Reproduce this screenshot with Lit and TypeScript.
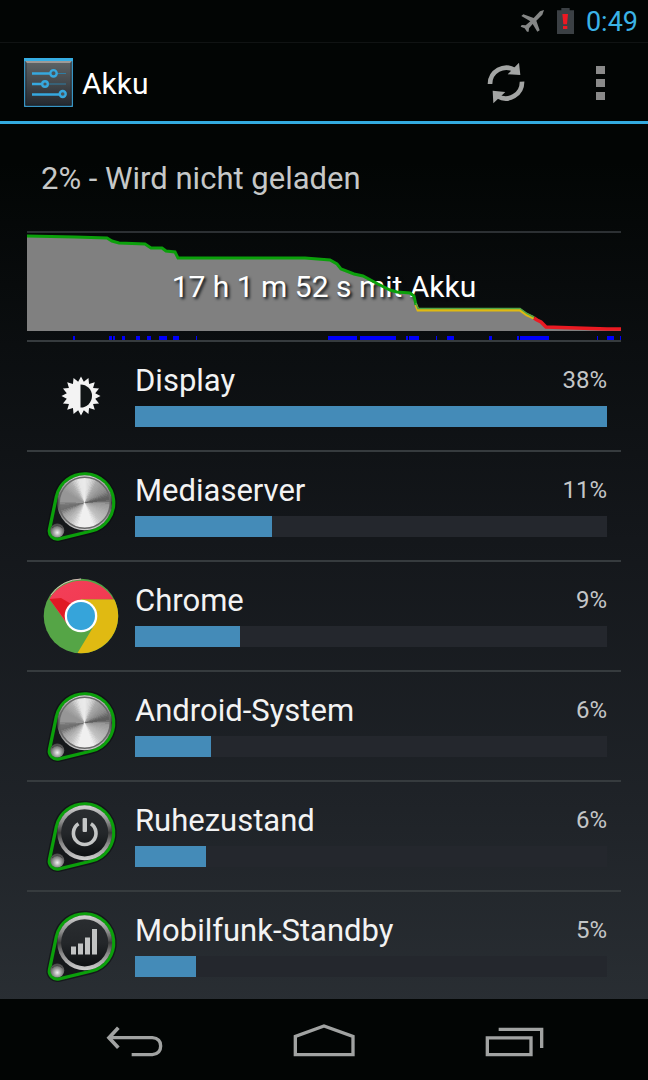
import { LitElement, html, css, svg, TemplateResult } from "lit";
import { customElement, property } from "lit/decorators.js";
import { styleMap } from "lit/directives/style-map.js";

interface Usage {
  name: string;
  percent: number;
  bar: number;
  icon: string;
}

const USAGE: Usage[] = [
  { name: "Display", percent: 38, bar: 100, icon: "display" },
  { name: "Mediaserver", percent: 11, bar: 29.1, icon: "metal" },
  { name: "Chrome", percent: 9, bar: 22.2, icon: "chrome" },
  { name: "Android-System", percent: 6, bar: 16.1, icon: "metal" },
  { name: "Ruhezustand", percent: 6, bar: 15, icon: "power" },
  { name: "Mobilfunk-Standby", percent: 5, bar: 13, icon: "signal" },
];

/* Battery history; x runs over 594 units, y over 107. */
const GREEN: number[][] = [
  [0, 3], [48, 4], [80, 5], [85, 8], [92, 10], [118, 11], [124, 15], [135, 15], [139, 18], [148, 19], [151, 25],
  [278, 25], [303, 27], [310, 31], [314, 36], [327, 41], [336, 43], [351, 51], [363, 57], [370, 59], [383, 60], [387, 63], [389, 72],
];
const YELLOW: number[][] = [[389, 72], [391, 77], [493, 77], [500, 82], [507, 85]];
const RED: number[][] = [[507, 85], [510, 87], [514, 89], [519, 94], [580, 96], [594, 96]];

const AWAKE: number[][] = [
  [46, 2], [82, 3], [86, 2], [95, 3], [109, 4], [120, 4], [132, 8], [146, 6], [169, 1], [301, 29], [333, 36],
  [379, 2], [382, 10], [409, 1], [420, 7], [462, 3], [490, 2], [493, 29], [570, 1], [580, 7], [593, 1],
];

const points = (list: number[][]) => list.map((p) => p.join(",")).join(" ");

/* Angular reflections of the brushed metal face: degrees clockwise from the top, grey level. */
const SHINE: number[][] = [
  [0, 235], [15, 215], [30, 170], [60, 140], [76, 95], [84, 95], [92, 150], [115, 175], [140, 195], [160, 240],
  [195, 240], [215, 195], [240, 160], [254, 110], [264, 115], [274, 150], [300, 150], [325, 175], [345, 230], [360, 235],
];

function grey(angle: number): number {
  for (let i = 1; i < SHINE.length; i++) {
    const [a0, g0] = SHINE[i - 1];
    const [a1, g1] = SHINE[i];
    if (angle <= a1) return Math.round(g0 + ((g1 - g0) * (angle - a0)) / (a1 - a0));
  }
  return 244;
}

const CX = 41.7;
const CY = 34.8;

function wedges(radius: number): TemplateResult[] {
  const step = 4;
  const at = (deg: number) => {
    const r = (deg * Math.PI) / 180;
    return `${(CX + radius * Math.sin(r)).toFixed(2)} ${(CY - radius * Math.cos(r)).toFixed(2)}`;
  };
  return Array.from({ length: 360 / step }, (_, i) => {
    const g = grey(i * step + step / 2);
    return svg`<path d="M${CX} ${CY}L${at(i * step)}L${at(i * step + step)}Z" fill="rgb(${g},${g},${g})" shape-rendering="crispEdges"/>`;
  });
}

function sunIcon(): TemplateResult {
  const rays = Array.from({ length: 32 }, (_, i) => {
    const r = i % 2 ? 14.5 : 19.5;
    const a = (i * Math.PI) / 16;
    return `${(38 + r * Math.sin(a)).toFixed(2)},${(38 - r * Math.cos(a)).toFixed(2)}`;
  }).join(" ");
  return html`<svg class="icon" viewBox="0 0 76 76" aria-hidden="true">
    <polygon points=${rays} fill="#f3f3f3" />
    <path d="M37.500 26.500a11.500 11.500 0 0 1 0 23z" fill="#101416" />
  </svg>`;
}

function chromeIcon(): TemplateResult {
  return html`<svg class="icon" viewBox="0 0 76 76" aria-hidden="true">
    <defs>
      <linearGradient id="red" x1="0.2" y1="0" x2="1" y2="1">
        <stop offset="0" stop-color="#f33f58" />
        <stop offset="0.6" stop-color="#f23a52" />
        <stop offset="0.75" stop-color="#e01a24" />
      </linearGradient>
    </defs>
    <circle cx="38" cy="38" r="37.3" fill="#55a546" />
    <path d="M6.400 21A37 37 0 0 1 70.500 21.500L38 21.500L24 46Z" fill="url(#red)" />
    <path d="M6.400 21L18 20L30 27L22 42Z" fill="#e01a24" />
    <path d="M38 21.500H71.300A37.300 37.300 0 0 1 34.500 75.100L52 46Z" fill="#e0ba12" />
    <circle cx="38" cy="38" r="16.300" fill="#fff" />
    <circle cx="38" cy="38" r="14" fill="#36a4da" />
    <path d="M8 17A37 37 0 0 1 38 1" fill="none" stroke="#d9b6ba" stroke-width="1" />
  </svg>`;
}

function knobIcon(kind: string): TemplateResult {
  const face =
    kind === "metal"
      ? svg`<circle cx=${CX} cy=${CY} r="27.500" fill="url(#rim)"/>${wedges(25.5)}
          <circle cx=${CX} cy=${CY} r="25.500" fill="none" stroke="#6a6a6a" stroke-width="1.500"/>`
      : svg`<circle cx=${CX} cy=${CY} r="27.500" fill="url(#rim)"/>
          <circle cx=${CX} cy=${CY} r="23.600" fill="url(#dark)"/>`;
  const glyph =
    kind === "power"
      ? svg`<path d="M35.500 25.800a11.300 11.300 0 1 0 12.400 0" fill="none" stroke="#c4c6c6" stroke-width="3.600"/>
          <rect x="39.600" y="20" width="4.400" height="14" rx="1" fill="#c4c6c6"/>`
      : kind === "signal"
        ? svg`<path d="M28 38.500h5v8h-5zM35 35.500h5v11h-5zM42 29.500h5v17h-5zM49 21h5v25.500h-5z" fill="#c2c4c4"/>`
        : null;
  return html`<svg class="icon" viewBox="0 0 76 76" aria-hidden="true">
    <defs>
      <linearGradient id="rim" x1="0" y1="0" x2="0" y2="1">
        <stop offset="0" stop-color="#d4d4d4" />
        <stop offset="0.3" stop-color="#8c8c8c" />
        <stop offset="0.5" stop-color="#3c3c3c" />
        <stop offset="0.7" stop-color="#8a8a8a" />
        <stop offset="1" stop-color="#d0d0d0" />
      </linearGradient>
      <linearGradient id="dark" x1="0" y1="0" x2="0" y2="1">
        <stop offset="0" stop-color="#2a2d30" />
        <stop offset="0.5" stop-color="#24272a" />
        <stop offset="1" stop-color="#0d1012" />
      </linearGradient>
      <radialGradient id="ball" cx="0.5" cy="0.65" r="0.6">
        <stop offset="0" stop-color="#f0f0f0" />
        <stop offset="0.5" stop-color="#999" />
        <stop offset="1" stop-color="#4a4a4a" />
      </radialGradient>
    </defs>
    <path d="M13.300 28.800A29 29 0 1 1 48.500 63L16.200 70.800A8 8 0 0 1 6.500 61.400Z" fill="#15181a" stroke="#0a0c0d" stroke-width="6" stroke-opacity="0.6" />
    <path d="M13.300 28.800A29 29 0 1 1 48.500 63L16.200 70.800A8 8 0 0 1 6.500 61.400Z" fill="#15181a" stroke="#0ba00b" stroke-width="3.300" />
    ${face}${glyph}
    <circle cx="14.300" cy="62.500" r="7" fill="url(#ball)" />
    <path d="M9 60q5-5 10.500 0" fill="none" stroke="#444" stroke-width="1" />
  </svg>`;
}

@customElement("usage-row")
class UsageRow extends LitElement {
  @property({ attribute: false }) item!: Usage;

  static styles = css`
    :host {
      display: grid;
      grid-template-columns: 76px 1fr;
      column-gap: 16px;
      align-items: center;
      padding: 0 14px 0 16px;
      border-bottom: 2px solid #363b3e;
    }
    .icon {
      display: block;
      width: 76px;
      height: 76px;
    }
    .body {
      padding: 21px 0 23px;
    }
    .labels {
      display: flex;
      justify-content: space-between;
      margin-bottom: 7px;
    }
    .name {
      margin: 0;
      font-size: 31px;
      line-height: 36px;
      font-weight: 400;
      color: #f3f3f3;
    }
    .percent {
      font-size: 24px;
      line-height: 34px;
      color: #c4c6c7;
    }
    .track {
      height: 21px;
      background: #24272d;
    }
    .fill {
      height: 100%;
      background: #448bb8;
    }
  `;

  render() {
    const { name, percent, bar, icon } = this.item;
    return html`
      ${icon === "display" ? sunIcon() : icon === "chrome" ? chromeIcon() : knobIcon(icon)}
      <div class="body">
        <div class="labels">
          <h2 class="name">${name}</h2>
          <span class="percent">${percent}%</span>
        </div>
        <div class="track" role="progressbar" aria-label=${name} aria-valuenow=${percent}>
          <div class="fill" style=${styleMap({ width: `${bar}%` })}></div>
        </div>
      </div>
    `;
  }
}

@customElement("battery-chart")
class BatteryChart extends LitElement {
  static styles = css`
    :host {
      display: grid;
      place-items: center;
      border-top: 2px solid #2c3033;
      border-bottom: 2px solid #363b3e;
    }
    .layer {
      grid-area: 1 / 1;
      display: block;
      width: 100%;
      height: 107px;
    }
    .caption {
      grid-area: 1 / 1;
      margin: 0;
      font-size: 30px;
      line-height: 36px;
      color: #fff;
      text-shadow: 2px 2px 3px #0c1216;
    }
  `;

  render() {
    return html`
      <svg class="layer" viewBox="0 0 594 107" preserveAspectRatio="none" aria-hidden="true">
        <polygon points="${points([...GREEN, ...YELLOW, ...RED])} 594,98 0,98" fill="#808080" />
        ${AWAKE.map(([x, w]) => svg`<rect x=${x} y="103" width=${w} height="4" fill="#0000fb"/>`)}
      </svg>
      <p class="caption">17 h 1 m 52 s mit Akku</p>
      <svg class="layer" viewBox="0 0 594 107" preserveAspectRatio="none" fill="none" stroke-width="3" aria-hidden="true">
        <polyline points=${points(GREEN)} stroke="#0ba00b" />
        <polyline points=${points(YELLOW)} stroke="#e0b911" />
        <polyline points="389,70 391,75.500 493,75.500 500,80.500 507,84" stroke="#4fa545" stroke-width="1.500" />
        <polyline points=${points(RED)} stroke="#ea1a22" stroke-width="3.500" />
      </svg>
    `;
  }
}

@customElement("app-root")
class AppRoot extends LitElement {
  static styles = css`
    :host {
      display: flex;
      flex-direction: column;
      height: 100vh;
      font-family: Roboto, "Noto Sans", sans-serif;
      color: #f3f3f3;
      background: linear-gradient(#020504 0, #020504 15%, #0b0e10 32%, #14171b 50%, #1f2328 75%, #292e33 93%);
    }
    .status {
      display: flex;
      justify-content: flex-end;
      align-items: center;
      height: 42px;
      padding-right: 10px;
      border-bottom: 1px solid #101313;
    }
    .plane {
      width: 25px;
      height: 24px;
      margin-right: 12px;
    }
    .battery {
      width: 17px;
      height: 26px;
      margin-right: 12px;
    }
    .clock {
      font-size: 27px;
      line-height: 32px;
      color: #3bb3e6;
      padding-top: 2px;
    }
    .bar {
      display: flex;
      align-items: center;
      height: 78px;
      padding: 0 24px;
      border-bottom: 3px solid #33abe0;
    }
    .logo {
      width: 49px;
      height: 49px;
    }
    .title {
      flex: 1;
      margin: 0 0 0 9px;
      padding-top: 4px;
      font-size: 30px;
      line-height: 36px;
      font-weight: 400;
      color: #fff;
    }
    .action,
    .key {
      display: grid;
      place-items: center;
      border: 0;
      padding: 0;
      background: none;
      cursor: pointer;
    }
    .action {
      width: 48px;
      height: 48px;
      margin-left: 46px;
    }
    .refresh {
      width: 40px;
      height: 42px;
      margin-top: 2px;
    }
    .dots {
      width: 9px;
      height: 34px;
      margin-top: 2px;
    }
    .content {
      flex: 1;
      min-height: 0;
      overflow: hidden;
      padding: 0 27px;
    }
    .summary {
      margin: 0;
      padding: 37px 14px 34px;
      font-size: 31px;
      line-height: 36px;
      color: #c6c8c8;
    }
    .nav {
      display: grid;
      grid-template-columns: repeat(3, 190px);
      justify-content: center;
      height: 81px;
      background: #020504;
    }
    .key svg {
      width: 64px;
      height: 34px;
      margin-top: 2px;
      fill: none;
      stroke: #a1a3a2;
      stroke-width: 10;
    }
  `;

  render() {
    return html`
      <header>
        <div class="status">
          <svg class="plane" viewBox="216 30 75 72" role="img" aria-label="Flugmodus">
            <path d="M288 33L276 37L257 57L226 46L220 51L247 67L233 79L221 78L218 83L230 88L237 98L242 98L243 88L254 75L268 98L275 94L265 65L283 47Z" fill="#858786" />
          </svg>
          <svg class="battery" viewBox="327 24 51 78" role="img" aria-label="Akku fast leer">
            <path d="M340 24h25v7h13v71h-51v-71h13z" fill="#3b4044" />
            <path d="M343 42h17l-3 31h-11zM345 78h13v9h-13z" fill="#ee1822" />
          </svg>
          <time class="clock">0:49</time>
        </div>
        <div class="bar">
          <svg class="logo" viewBox="0 0 49 49" aria-hidden="true">
            <defs>
              <linearGradient id="tile" x1="0" y1="0" x2="0" y2="1">
                <stop offset="0" stop-color="#626769" />
                <stop offset="0.5" stop-color="#44494d" />
                <stop offset="1" stop-color="#23272d" />
              </linearGradient>
            </defs>
            <rect x="0.5" y="0.5" width="48" height="48" rx="1" fill="url(#tile)" stroke="#3795c4" stroke-width="1.500" />
            <path d="M0 1.500h49" stroke="#36aee4" stroke-width="3" />
            <path d="M2 4h45" stroke="#b3aca8" stroke-width="1.500" />
            <path d="M2 4v43h45v-43" fill="none" stroke="#1c242b" stroke-opacity="0.7" />
            <path d="M8 15.500h34M8 26h34" stroke="#2f7da3" stroke-width="1" />
            <path d="M8 15.500h20M8 26h10M8 36.500h28" stroke="#36a8de" stroke-width="2.400" />
            <g fill="#4a5459" stroke="#36a8de" stroke-width="2.400">
              <circle cx="29.500" cy="15.300" r="3.200" />
              <circle cx="21" cy="26" r="2.800" />
              <circle cx="38.700" cy="36" r="3" />
            </g>
          </svg>
          <h1 class="title">Akku</h1>
          <button class="action" aria-label="Aktualisieren">
            <svg class="refresh" viewBox="115 186 120 126">
              <g fill="none" stroke="#a3a5a4" stroke-width="14">
                <path d="M127 252A49 49 0 0 1 201 210" />
                <path d="M223 245A49 49 0 0 1 150 289" />
              </g>
              <path d="M214 188L218 225L180 223ZM135 272L173 276L137 310Z" fill="#a3a5a4" />
            </svg>
          </button>
          <button class="action" aria-label="Weitere Optionen">
            <svg class="dots" viewBox="0 0 9 34"><path d="M0 0h9v8H0zM0 13h9v8H0zM0 26h9v8H0z" fill="#8a8a8a" /></svg>
          </button>
        </div>
      </header>
      <main class="content">
        <p class="summary">2% - Wird nicht geladen</p>
        <battery-chart></battery-chart>
        ${USAGE.map((item) => html`<usage-row .item=${item}></usage-row>`)}
      </main>
      <nav class="nav">
        <button class="key" aria-label="Zurück">
          <svg viewBox="67 102 192 102">
            <path d="M87 143H218Q243 145 243 168Q243 191 218 194H156" />
            <path d="M116 113L88 143L116 173" stroke-width="11" />
          </svg>
        </button>
        <button class="key" aria-label="Startseite">
          <svg viewBox="636 102 192 102"><path d="M646 194V139L732 108L819 139V194Z" /></svg>
        </button>
        <button class="key" aria-label="Letzte Apps">
          <svg viewBox="1207 102 192 102"><path d="M1223 143.500H1354V194H1223ZM1257 118H1386V174" /></svg>
        </button>
      </nav>
    `;
  }
}
